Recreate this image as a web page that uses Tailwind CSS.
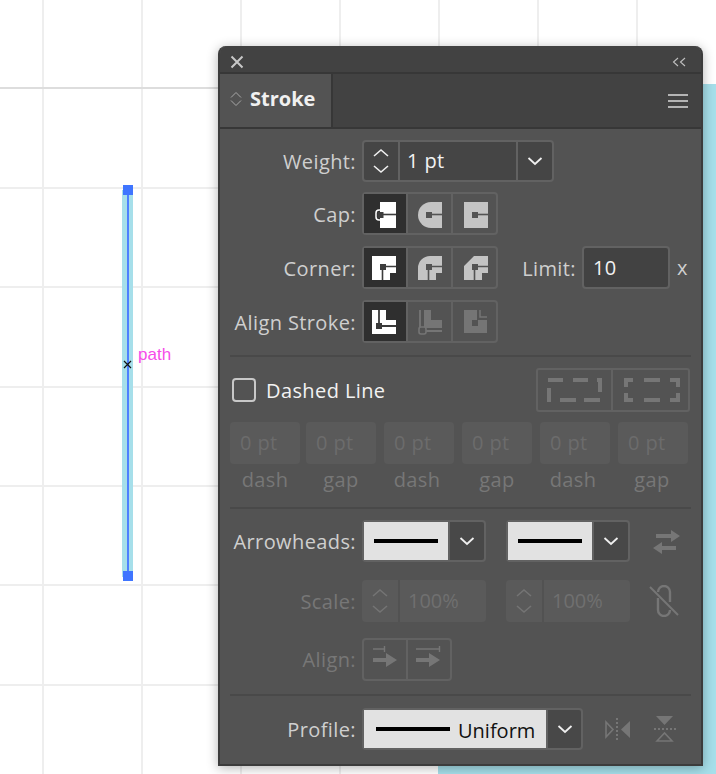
<!DOCTYPE html>
<html lang="en">
<head>
  <meta charset="UTF-8">
  <title>Stroke panel</title>
  <script src="https://cdn.jsdelivr.net/npm/@tailwindcss/browser@4"></script>
</head>
<body class="m-0 bg-white">
<div class="relative w-[716px] h-[774px] overflow-hidden bg-white font-['Open_Sans',sans-serif]">

  <!-- Artboard grid -->
  <div class="absolute left-[42px] top-0 w-[2px] h-full bg-[#eeeeee]"></div>
  <div class="absolute left-[141px] top-0 w-[2px] h-full bg-[#eeeeee]"></div>
  <div class="absolute left-[240px] top-0 w-[2px] h-full bg-[#eeeeee]"></div>
  <div class="absolute left-[339px] top-0 w-[2px] h-full bg-[#eeeeee]"></div>
  <div class="absolute left-[438px] top-0 w-[2px] h-full bg-[#eeeeee]"></div>
  <div class="absolute left-[537px] top-0 w-[2px] h-full bg-[#eeeeee]"></div>
  <div class="absolute left-[636px] top-0 w-[2px] h-full bg-[#eeeeee]"></div>
  <div class="absolute left-0 top-[87px] w-full h-[2px] bg-[#dddddd]"></div>
  <div class="absolute left-0 top-[187px] w-full h-[2px] bg-[#eeeeee]"></div>
  <div class="absolute left-0 top-[286px] w-full h-[2px] bg-[#eeeeee]"></div>
  <div class="absolute left-0 top-[386px] w-full h-[2px] bg-[#eeeeee]"></div>
  <div class="absolute left-0 top-[485px] w-full h-[2px] bg-[#eeeeee]"></div>
  <div class="absolute left-0 top-[584px] w-full h-[2px] bg-[#eeeeee]"></div>
  <div class="absolute left-0 top-[684px] w-full h-[2px] bg-[#eeeeee]"></div>

  <!-- Cyan shape behind the panel -->
  <div class="absolute left-[438px] top-[84px] w-[278px] h-[690px] bg-[#a6dfea]"></div>

  <!-- Selected path -->
  <div class="absolute left-[122px] top-[190px] w-[11px] h-[387px] bg-[#a6dfea]"></div>
  <div class="absolute left-[127px] top-[190px] w-[2px] h-[387px] bg-[#4d7fff]"></div>
  <div class="absolute left-[123px] top-[185px] w-[10px] h-[10px] bg-[#3f75ff]"></div>
  <div class="absolute left-[123px] top-[571px] w-[10px] h-[10px] bg-[#3f75ff]"></div>
  <svg class="absolute left-[123px] top-[360px]" width="9" height="9" viewBox="0 0 9 9"><path d="M1 1l7 7M8 1l-7 7" stroke="#111" stroke-width="1.2" fill="none"/></svg>
  <span class="absolute left-[138px] top-[344px] text-[17px] leading-[22px] text-[#f64ce9] font-['Liberation_Sans',sans-serif]">path</span>

  <!-- Stroke panel -->
  <div class="absolute left-[218px] top-[46px] w-[485px] h-[720px] rounded-t-[8px] bg-[#535353] border-x-2 border-b-2 border-[#3c3c3c] shadow-[0_2px_12px_rgba(0,0,0,0.3)] flex flex-col">

    <!-- Title bar -->
    <div class="h-[20px] pt-[6px] shrink-0 flex items-center justify-between pl-[10px] pr-[15px] bg-[#424242] rounded-t-[8px] border-b-2 border-[#373737] box-content">
      <svg width="14" height="14" viewBox="0 0 14 14"><path d="M1.500 1.500l11 11M12.500 1.500l-11 11" stroke="#c8c8c8" stroke-width="2" fill="none"/></svg>
      <svg width="14" height="10" viewBox="0 0 14 10"><path d="M6 1L1.500 5 6 9M13 1L8.500 5 13 9" stroke="#c0c0c0" stroke-width="1.100" fill="none"/></svg>
    </div>

    <!-- Tab row -->
    <div class="h-[53px] shrink-0 flex justify-between bg-[#424242] border-b-2 border-[#373737] box-content">
      <div class="w-[113px] flex items-center gap-[8px] pl-[10px] pb-[3px] bg-[#535353] border-r-2 border-[#373737]">
        <svg width="12" height="16" viewBox="0 0 12 16"><path d="M1 6.500L6 1.500l5 5M1 9.500l5 5 5-5" stroke="#a8a8a8" stroke-width="1" fill="none"/></svg>
        <span class="text-[20px] leading-none font-bold text-[#f0f0f0]">Stroke</span>
      </div>
      <div class="flex flex-col gap-[4px] justify-center pr-[13px]">
        <div class="w-[20px] h-[2px] bg-[#b4b4b4]"></div>
        <div class="w-[20px] h-[2px] bg-[#b4b4b4]"></div>
        <div class="w-[20px] h-[2px] bg-[#b4b4b4]"></div>
      </div>
    </div>

    <!-- Weight -->
    <div class="flex items-center mt-[11px] h-[42px]">
      <span class="w-[136px] pt-[2px] text-right text-[20px] tracking-[0.4px] text-[#cfcfcf]">Weight:</span>
      <div class="ml-[6px] w-[192px] h-[42px] flex rounded-[4px] border-2 border-[#626262] bg-[#454545]">
        <div class="w-[36px] flex items-center justify-center border-r-2 border-[#626262]">
          <svg width="18" height="30" viewBox="0 0 18 30"><path d="M2 10l7-6 7 6M2 20l7 6 7-6" stroke="#f0f0f0" stroke-width="1.600" fill="none"/></svg>
        </div>
        <div class="w-[118px] pl-[7px] text-[20px] leading-[38px] tracking-[0.4px] text-[#f2f2f2] border-r-2 border-[#626262]">1 pt</div>
        <div class="flex-1 flex items-center justify-center">
          <svg width="16" height="10" viewBox="0 0 16 10"><path d="M1.500 2l6.500 6 6.500-6" stroke="#f0f0f0" stroke-width="1.800" fill="none"/></svg>
        </div>
      </div>
    </div>

    <!-- Cap -->
    <div class="flex items-center mt-[10px] h-[43px]">
      <span class="w-[136px] pt-[2px] text-right text-[20px] tracking-[0.4px] text-[#cfcfcf]">Cap:</span>
      <div class="ml-[6px] w-[136px] h-[43px] flex rounded-[4px] border-2 border-[#626262]">
        <div class="w-[42px] bg-[#2f2f2f]">
          <svg width="42" height="39" viewBox="0 0 42 39"><path d="M16 8h16v26H16z" fill="#fff"/><path d="M16 16h-1a3 3 0 0 0-3 3v4a3 3 0 0 0 3 3h1" stroke="#fff" stroke-width="1.500" fill="#2f2f2f"/><path d="M13.500 18h6v6h-6z" fill="#3d3d3d"/><path d="M19 20.500h13" stroke="#3d3d3d" stroke-width="1.600"/></svg>
        </div>
        <div class="w-[45px] border-l-2 border-[#626262]">
          <svg width="43" height="39" viewBox="0 0 43 39"><path d="M34 8v26H23a13 13 0 0 1 0-26z" fill="#c4c4c4"/><path d="M18 18h6v6h-6z" fill="#535353"/><path d="M24 20.500h10" stroke="#535353" stroke-width="1.600"/></svg>
        </div>
        <div class="flex-1 border-l-2 border-[#626262]">
          <svg width="43" height="39" viewBox="0 0 43 39"><path d="M11 8h24v26H11z" fill="#c4c4c4"/><path d="M19 18h6v6h-6z" fill="#535353"/><path d="M25 20.500h10" stroke="#535353" stroke-width="1.600"/></svg>
        </div>
      </div>
    </div>

    <!-- Corner + limit -->
    <div class="flex items-center mt-[11px] h-[43px]">
      <span class="w-[136px] pt-[2px] text-right text-[20px] tracking-[0.4px] text-[#cfcfcf]">Corner:</span>
      <div class="ml-[6px] w-[136px] h-[43px] flex rounded-[4px] border-2 border-[#626262]">
        <div class="w-[42px] bg-[#2f2f2f]">
          <svg width="42" height="39" viewBox="0 0 42 39"><path d="M8 8h24v17h-6v7H8z" fill="#fff"/><path d="M16 16h6v6h-6z" fill="#3d3d3d"/><path d="M22 18.500h10M18.500 22v10" stroke="#3d3d3d" stroke-width="1.600"/></svg>
        </div>
        <div class="w-[45px] border-l-2 border-[#626262]">
          <svg width="43" height="39" viewBox="0 0 43 39"><path d="M22 8h12v17h-6v7H10V20a12 12 0 0 1 12-12z" fill="#c4c4c4"/><path d="M18 16h6v6h-6z" fill="#535353"/><path d="M24 18.500h10M20.500 22v10" stroke="#535353" stroke-width="1.600"/></svg>
        </div>
        <div class="flex-1 border-l-2 border-[#626262]">
          <svg width="43" height="39" viewBox="0 0 43 39"><path d="M21 8h14v17h-6v7H11V18z" fill="#c4c4c4"/><path d="M19 16h6v6h-6z" fill="#535353"/><path d="M25 18.500h10M21.500 22v10" stroke="#535353" stroke-width="1.600"/></svg>
        </div>
      </div>
      <span class="w-[78px] pt-[2px] text-right text-[20px] tracking-[0.4px] text-[#cfcfcf]">Limit:</span>
      <div class="ml-[6px] w-[88px] h-[43px] rounded-[4px] border-2 border-[#626262] bg-[#424242] pl-[9px] text-[20px] leading-[39px] tracking-[0.4px] text-[#f2f2f2]">10</div>
      <span class="ml-[7px] text-[20px] text-[#cfcfcf]">x</span>
    </div>

    <!-- Align stroke -->
    <div class="flex items-center mt-[11px] h-[43px]">
      <span class="w-[136px] pt-[2px] text-right text-[20px] tracking-[0.4px] whitespace-nowrap text-[#cfcfcf]">Align Stroke:</span>
      <div class="ml-[6px] w-[136px] h-[43px] flex rounded-[4px] border-2 border-[#626262]">
        <div class="w-[42px] bg-[#2f2f2f]">
          <svg width="42" height="39" viewBox="0 0 42 39"><path d="M8 8h14v10h10v14H8z" fill="#fff"/><path d="M12 21h6v6h-6z" fill="#3a3a3a"/><path d="M15 8v13M18 24h14" stroke="#3a3a3a" stroke-width="1.800"/></svg>
        </div>
        <div class="w-[45px] border-l-2 border-[#626262]">
          <svg width="43" height="39" viewBox="0 0 43 39"><path d="M16 8h7v10h11v8H16z" fill="#757575"/><path d="M12 8v17M18 29h16" stroke="#757575" stroke-width="1.800" fill="none"/><rect x="11" y="25" width="7" height="7" rx="2" fill="#535353" stroke="#757575" stroke-width="1.600"/></svg>
        </div>
        <div class="flex-1 border-l-2 border-[#626262]">
          <svg width="43" height="39" viewBox="0 0 43 39"><path d="M11 8h13v10h10v13H11z" fill="#757575"/><path d="M27 8v7h7" stroke="#757575" stroke-width="1.500" fill="none"/><path d="M19 18h6v6h-6z" fill="#535353"/></svg>
        </div>
      </div>
    </div>

    <div class="mt-[12px] mx-[10px] h-[2px] bg-[#494949]"></div>

    <!-- Dashed line -->
    <div class="flex items-center mt-[11px] h-[44px] pl-[12px]">
      <div class="w-[24px] h-[24px] rounded-[4px] border-2 border-[#c8c8c8]"></div>
      <span class="ml-[10px] pt-[2px] text-[20px] tracking-[0.4px] text-[#f2f2f2]">Dashed Line</span>
      <div class="ml-auto mr-[11px] w-[154px] h-[44px] flex rounded-[3px] border-2 border-[#626262]">
        <div class="w-[75px] border-r-2 border-[#626262]">
          <svg width="74" height="40" viewBox="0 0 74 40"><path d="M10 8h15v4H10zM35 8h15v4H35zM59 8h5v14h-4v-10h-1zM9 18h4v14h-4zM22 28h16v4H22zM46 28h16v4H46z" fill="#767676"/></svg>
        </div>
        <div class="flex-1">
          <svg width="76" height="40" viewBox="0 0 76 40"><path d="M11 8h9v4h-5v5h-4zM31 8h16v4H31zM57 8h10v9h-4v-5h-6zM11 23h4v5h5v4h-9zM31 28h16v4H31zM63 23h4v9h-10v-4h6z" fill="#767676"/></svg>
        </div>
      </div>
    </div>

    <!-- Dash inputs -->
    <div class="flex mt-[10px] pl-[10px]">
      <div class="w-[70px] flex flex-col items-center">
        <div class="w-[70px] h-[42px] rounded-[4px] bg-[#5a5a5a] pl-[10px] text-[20px] leading-[42px] tracking-[0.4px] text-[#6c6c6c]">0 pt</div>
        <span class="mt-[2px] text-[20px] leading-[27px] tracking-[0.4px] text-[#777777]">dash</span>
      </div>
      <div class="ml-[6px] w-[70px] flex flex-col items-center">
        <div class="w-[70px] h-[42px] rounded-[4px] bg-[#5a5a5a] pl-[10px] text-[20px] leading-[42px] tracking-[0.4px] text-[#6c6c6c]">0 pt</div>
        <span class="mt-[2px] text-[20px] leading-[27px] tracking-[0.4px] text-[#777777]">gap</span>
      </div>
      <div class="ml-[8px] w-[70px] flex flex-col items-center">
        <div class="w-[70px] h-[42px] rounded-[4px] bg-[#5a5a5a] pl-[10px] text-[20px] leading-[42px] tracking-[0.4px] text-[#6c6c6c]">0 pt</div>
        <span class="mt-[2px] text-[20px] leading-[27px] tracking-[0.4px] text-[#777777] mr-[4px]">dash</span>
      </div>
      <div class="ml-[8px] w-[70px] flex flex-col items-center">
        <div class="w-[70px] h-[42px] rounded-[4px] bg-[#5a5a5a] pl-[10px] text-[20px] leading-[42px] tracking-[0.4px] text-[#6c6c6c]">0 pt</div>
        <span class="mt-[2px] text-[20px] leading-[27px] tracking-[0.4px] text-[#777777]">gap</span>
      </div>
      <div class="ml-[8px] w-[70px] flex flex-col items-center">
        <div class="w-[70px] h-[42px] rounded-[4px] bg-[#5a5a5a] pl-[10px] text-[20px] leading-[42px] tracking-[0.4px] text-[#6c6c6c]">0 pt</div>
        <span class="mt-[2px] text-[20px] leading-[27px] tracking-[0.4px] text-[#777777] mr-[4px]">dash</span>
      </div>
      <div class="ml-[8px] w-[70px] flex flex-col items-center">
        <div class="w-[70px] h-[42px] rounded-[4px] bg-[#5a5a5a] pl-[10px] text-[20px] leading-[42px] tracking-[0.4px] text-[#6c6c6c]">0 pt</div>
        <span class="mt-[2px] text-[20px] leading-[27px] tracking-[0.4px] text-[#777777] mr-[2px]">gap</span>
      </div>
    </div>

    <div class="mt-[14px] mx-[10px] h-[2px] bg-[#494949]"></div>

    <!-- Arrowheads -->
    <div class="flex items-center mt-[11px] h-[42px]">
      <span class="w-[136px] pt-[2px] text-right text-[20px] tracking-[0.4px] text-[#cfcfcf]">Arrowheads:</span>
      <div class="ml-[6px] w-[124px] h-[42px] flex rounded-[4px] border-2 border-[#626262] bg-[#484848]">
        <div class="w-[84px] bg-[#e2e2e2] border-r-2 border-[#626262] box-content flex items-center justify-center"><div class="w-[64px] h-[4px] bg-black"></div></div>
        <div class="flex-1 flex items-center justify-center">
          <svg width="16" height="10" viewBox="0 0 16 10"><path d="M1.500 2l6.500 6 6.500-6" stroke="#f0f0f0" stroke-width="1.800" fill="none"/></svg>
        </div>
      </div>
      <div class="ml-[20px] w-[124px] h-[42px] flex rounded-[4px] border-2 border-[#626262] bg-[#484848]">
        <div class="w-[84px] bg-[#e2e2e2] border-r-2 border-[#626262] box-content flex items-center justify-center"><div class="w-[64px] h-[4px] bg-black"></div></div>
        <div class="flex-1 flex items-center justify-center">
          <svg width="16" height="10" viewBox="0 0 16 10"><path d="M1.500 2l6.500 6 6.500-6" stroke="#f0f0f0" stroke-width="1.800" fill="none"/></svg>
        </div>
      </div>
      <svg class="ml-[22px]" width="28" height="28" viewBox="0 0 28 28"><path d="M4 7h15V3l9 6-9 6v-4H4zM24 19H10v-4l-9 6 9 6v-4h14z" fill="#767676"/></svg>
    </div>

    <!-- Scale -->
    <div class="flex items-center mt-[18px] h-[42px]">
      <span class="w-[136px] pt-[2px] text-right text-[20px] tracking-[0.4px] text-[#777777]">Scale:</span>
      <div class="ml-[6px] w-[124px] h-[42px] flex rounded-[4px] bg-[#5a5a5a]">
        <div class="w-[38px] flex items-center justify-center border-r-2 border-[#525252]">
          <svg width="18" height="30" viewBox="0 0 18 30"><path d="M2 10l7-6 7 6M2 20l7 6 7-6" stroke="#747474" stroke-width="1.600" fill="none"/></svg>
        </div>
        <div class="pl-[8px] text-[20px] leading-[42px] text-[#707070]">100%</div>
      </div>
      <div class="ml-[20px] w-[124px] h-[42px] flex rounded-[4px] bg-[#5a5a5a]">
        <div class="w-[38px] flex items-center justify-center border-r-2 border-[#525252]">
          <svg width="18" height="30" viewBox="0 0 18 30"><path d="M2 10l7-6 7 6M2 20l7 6 7-6" stroke="#747474" stroke-width="1.600" fill="none"/></svg>
        </div>
        <div class="pl-[8px] text-[20px] leading-[42px] text-[#707070]">100%</div>
      </div>
      <svg class="ml-[19px]" width="30" height="32" viewBox="0 0 30 32"><path d="M1 2l28 28" stroke="#767676" stroke-width="2" fill="none"/><path d="M9 7a6 6 0 0 1 12 0v10M9 13v12a6 6 0 0 0 12 0" stroke="#767676" stroke-width="2.400" fill="none"/></svg>
    </div>

    <!-- Align -->
    <div class="flex items-center mt-[16px] h-[43px]">
      <span class="w-[136px] text-right text-[20px] tracking-[0.4px] text-[#777777]">Align:</span>
      <div class="ml-[6px] w-[90px] h-[43px] flex rounded-[4px] border-2 border-[#626262]">
        <div class="w-[42px] border-r-2 border-[#626262] box-content">
          <svg width="43" height="39" viewBox="0 0 43 39"><path d="M9 9h12M20.500 6v6" stroke="#767676" stroke-width="1.400" fill="none"/><path d="M9 18h13v-5l11 7-11 7v-5H9z" fill="#767676"/></svg>
        </div>
        <div class="flex-1">
          <svg width="43" height="39" viewBox="0 0 43 39"><path d="M8 9h24M31.500 6v6" stroke="#767676" stroke-width="1.400" fill="none"/><path d="M8 18h13v-5l11 7-11 7v-5H8z" fill="#767676"/></svg>
        </div>
      </div>
    </div>

    <div class="mt-[13px] mx-[10px] h-[2px] bg-[#494949]"></div>

    <!-- Profile -->
    <div class="flex items-center mt-[12px] h-[42px]">
      <span class="w-[136px] pt-[2px] text-right text-[20px] tracking-[0.4px] text-[#cfcfcf]">Profile:</span>
      <div class="ml-[6px] w-[221px] h-[42px] flex rounded-[4px] border-2 border-[#626262] bg-[#484848]">
        <div class="w-[184px] bg-[#e2e2e2] border-r-2 border-[#626262] flex items-center pl-[12px]">
          <div class="w-[74px] h-[4px] bg-black"></div>
          <span class="ml-[8px] pt-[4px] text-[20px] text-[#111111]">Uniform</span>
        </div>
        <div class="flex-1 flex items-center justify-center">
          <svg width="16" height="10" viewBox="0 0 16 10"><path d="M1.500 2l6.500 6 6.500-6" stroke="#f0f0f0" stroke-width="1.800" fill="none"/></svg>
        </div>
      </div>
      <svg class="ml-[20px]" width="28" height="24" viewBox="0 0 28 24"><path d="M3 5l7 7.500L3 20z" fill="none" stroke="#767676" stroke-width="1.600"/><path d="M27 4v17l-9-8.500z" fill="#767676"/><path d="M14 1v22" stroke="#767676" stroke-width="2" stroke-dasharray="2 2"/></svg>
      <svg class="ml-[23px]" width="24" height="28" viewBox="0 0 24 28"><path d="M2 1h17l-8.500 9z" fill="#767676"/><path d="M3 26l7.500-8 7.500 8z" fill="none" stroke="#767676" stroke-width="1.600"/><path d="M0 14h22" stroke="#767676" stroke-width="2" stroke-dasharray="2 2"/></svg>
    </div>
  </div>
</div>
</body>
</html>
